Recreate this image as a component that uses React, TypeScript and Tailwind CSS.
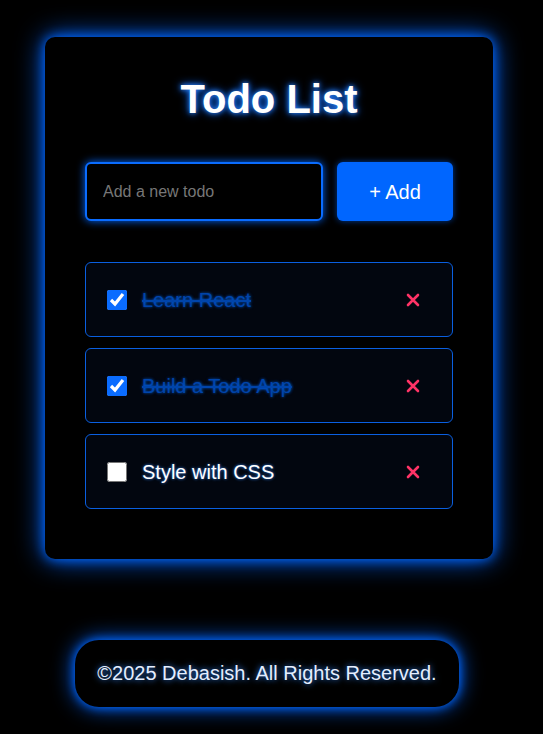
import { useState } from "react";

type Todo = { id: number; text: string; done: boolean };

const initialTodos: Todo[] = [
  { id: 1, text: "Learn React", done: true },
  { id: 2, text: "Build a Todo App", done: true },
  { id: 3, text: "Style with CSS", done: false },
];

function CrossIcon() {
  return (
    <svg width="14" height="14" viewBox="0 0 14 14" fill="none">
      <path d="M2 2 L12 12 M12 2 L2 12" stroke="#ff3366" strokeWidth="2.6" strokeLinecap="round" />
    </svg>
  );
}

export default function App() {
  const [todos, setTodos] = useState<Todo[]>(initialTodos);
  const [text, setText] = useState("");

  const toggle = (id: number) =>
    setTodos(todos.map((t) => (t.id === id ? { ...t, done: !t.done } : t)));

  return (
    <div className="min-h-screen bg-black flex flex-col items-center pt-[37px] pr-[5px] font-['Liberation_Sans',Arial,sans-serif]">
      <div className="w-[448px] rounded-[10px] bg-black px-[40px] pt-[39px] pb-[50px] shadow-[0_0_12px_#0066ff,0_0_28px_#0066ff]">
        <h1 className="text-center text-[40px] leading-[46px] font-bold text-white [text-shadow:0_0_5px_#3388ff,0_0_10px_#0066ff]">
          Todo List
        </h1>

        <div className="mt-[40px] flex gap-[14px]">
          <input
            value={text}
            onChange={(e) => setText(e.target.value)}
            placeholder="Add a new todo"
            className="h-[59px] w-[238px] rounded-[6px] border-2 border-[#0a6cff] bg-black px-4 text-base text-white placeholder:text-[#777777] outline-none shadow-[0_0_8px_#0066ff]"
          />
          <button className="h-[59px] flex-1 rounded-[6px] bg-[#0066ff] text-[20px] text-white shadow-[0_0_6px_#0066ff99]">
            + Add
          </button>
        </div>

        <ul className="mt-[41px] flex flex-col gap-[11px]">
          {todos.map((todo) => (
            <li
              key={todo.id}
              className="flex h-[75px] items-center rounded-[6px] border border-[#0a5fe0] bg-[#02060f] pl-[21px] pr-[32px]"
            >
              <input
                type="checkbox"
                checked={todo.done}
                onChange={() => toggle(todo.id)}
                className="h-5 w-5 accent-[#0a6cff]"
              />
              <span
                className={
                  todo.done
                    ? "ml-[15px] flex-1 text-[20px] text-[#0044aa] line-through [text-shadow:0_0_3px_#0055cc]"
                    : "ml-[15px] flex-1 text-[20px] text-white [text-shadow:0_0_3px_#3388ff]"
                }
              >
                {todo.text}
              </span>
              <button onClick={() => setTodos(todos.filter((t) => t.id !== todo.id))}>
                <CrossIcon />
              </button>
            </li>
          ))}
        </ul>
      </div>

      <footer className="mt-[81px] mr-[4px] rounded-[24px] bg-black px-[22px] py-[22px] text-[20px] leading-[23px] text-[#e4eeff] shadow-[0_0_10px_#0066ff,0_0_22px_#0066ff] [text-shadow:0_0_6px_#3388ff]">
        ©2025 Debasish. All Rights Reserved.
      </footer>
    </div>
  );
}
